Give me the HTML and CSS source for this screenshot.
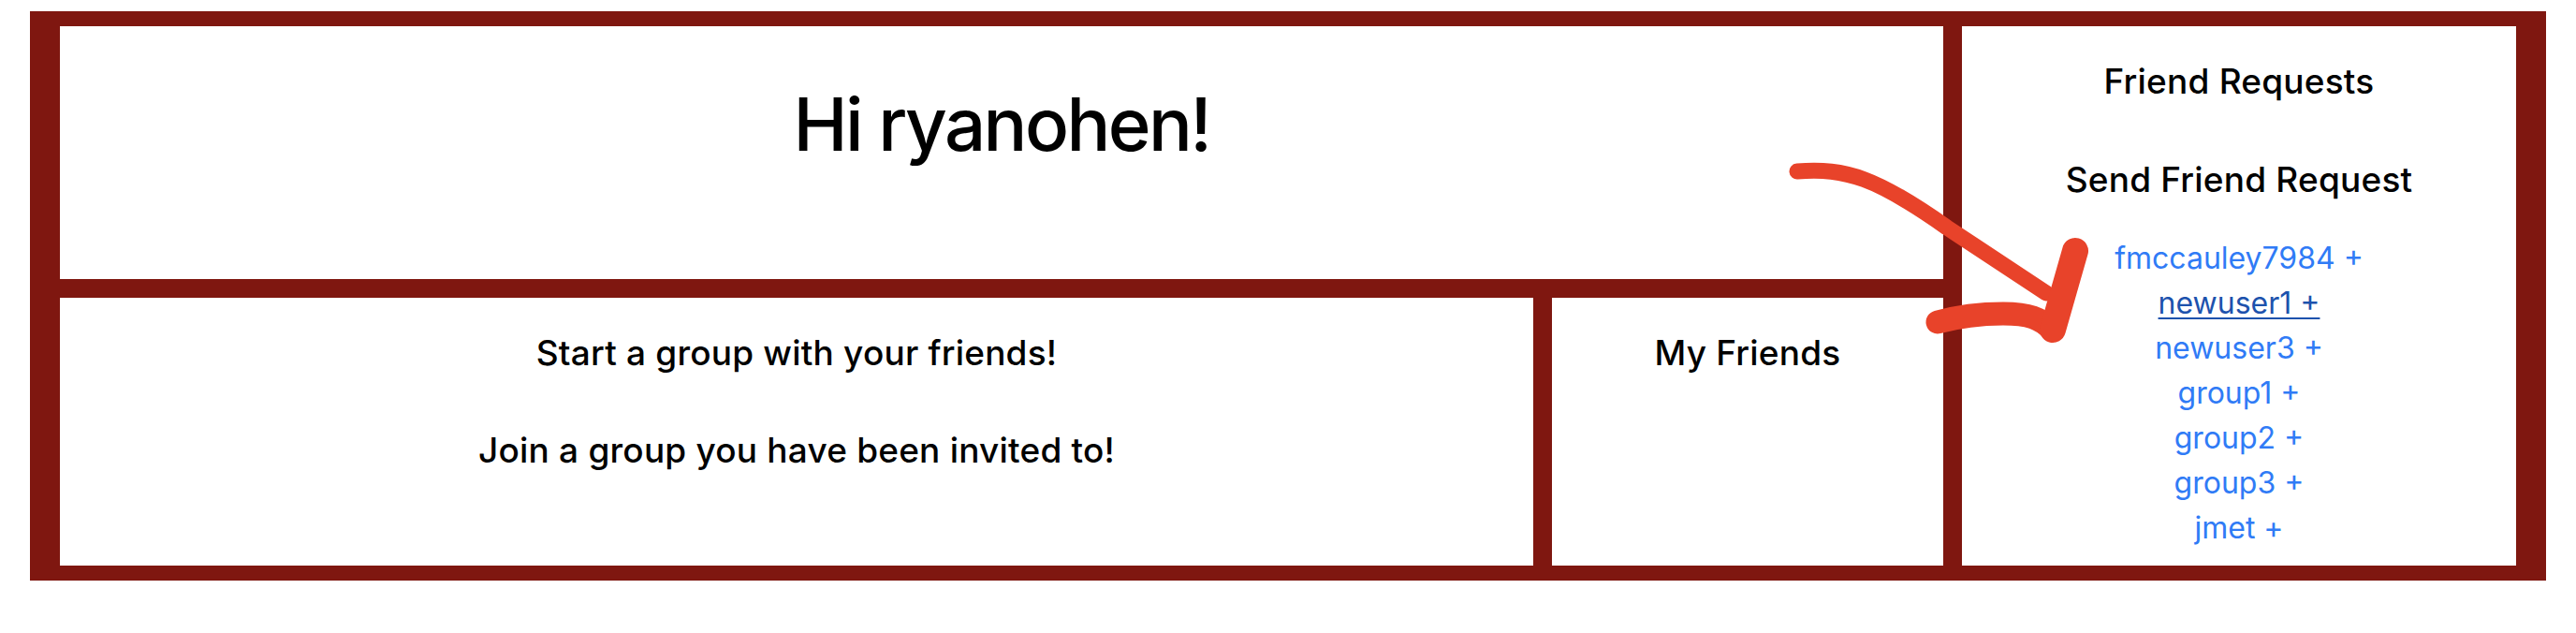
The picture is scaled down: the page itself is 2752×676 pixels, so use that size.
FILE: index.html
```html
<!DOCTYPE html>
<html lang="en">
<head>
<meta charset="utf-8">
<title>Home</title>
<link rel="stylesheet" href="styles.css">
</head>
<body>
  <main class="board">
    <section class="cell cell-greeting">
      <h1 class="greeting">Hi ryanohen!</h1>
    </section>
    <section class="cell cell-groups">
      <h3 class="heading heading-start">Start a group with your friends!</h3>
      <h3 class="heading heading-join">Join a group you have been invited to!</h3>
    </section>
    <section class="cell cell-friends">
      <h3 class="heading">My Friends</h3>
    </section>
    <aside class="cell cell-requests">
      <h3 class="heading">Friend Requests</h3>
      <h3 class="heading heading-send">Send Friend Request</h3>
      <ul class="user-list">
        <li><a href="#" class="user-link">fmccauley7984 +</a></li>
        <li><a href="#" class="user-link is-hover">newuser1 +</a></li>
        <li><a href="#" class="user-link">newuser3 +</a></li>
        <li><a href="#" class="user-link">group1 +</a></li>
        <li><a href="#" class="user-link">group2 +</a></li>
        <li><a href="#" class="user-link">group3 +</a></li>
        <li><a href="#" class="user-link">jmet +</a></li>
      </ul>
    </aside>
  </main>
  <svg class="annotation" viewBox="0 0 2752 676" width="2752" height="676" aria-hidden="true">
    <path class="stroke shaft" d="M1920,183 C1972,179 2005,190 2080,243 L2186,313"/>
    <path class="stroke barb-low" d="M2070,344 C2092,338 2112,335 2140,335 C2168,335 2180,340 2192,352"/>
    <path class="stroke barb-high" d="M2193,352 L2217,268"/>
  </svg>
</body>
</html>
```
FILE: styles.css
```css
* {
  box-sizing: border-box;
}

html, body {
  margin: 0;
  background: #ffffff;
}

body {
  position: relative;
  padding: 12px 32px;
  font-family: Inter, "Liberation Sans", Arial, sans-serif;
  color: #000000;
}

.board {
  display: grid;
  grid-template-columns: 1574fr 418fr 592fr;
  grid-template-rows: 270px 286px;
  gap: 20px;
  padding: 16px 32px;
  background: #7f1710;
}

.cell {
  background: #ffffff;
  text-align: center;
  overflow: hidden;
}

.cell-greeting {
  grid-column: 1 / 3;
  grid-row: 1;
}

.cell-groups {
  grid-column: 1;
  grid-row: 2;
}

.cell-friends {
  grid-column: 2;
  grid-row: 2;
}

.cell-requests {
  grid-column: 3;
  grid-row: 1 / 3;
}

.greeting {
  margin: 56px 0 0;
  font-size: 78px;
  line-height: 97px;
  font-weight: 500;
  letter-spacing: -2.6px;
}

.heading {
  margin: 37px 0 0;
  font-size: 37px;
  line-height: 44px;
  font-weight: 500;
  letter-spacing: 0.2px;
}

.heading-join {
  margin-top: 60px;
}

.heading-send {
  margin-top: 61px;
}

.user-list {
  list-style: none;
  margin: 38px 0 0;
  padding: 0;
}

.user-list li {
  font-size: 32px;
  line-height: 48px;
}

.user-link {
  color: #307bf6;
  text-decoration: none;
}

.user-link.is-hover {
  color: #1d52ad;
  text-decoration: underline;
  text-decoration-thickness: 2px;
  text-underline-offset: 4px;
}

.annotation {
  position: absolute;
  top: 0;
  left: 0;
  pointer-events: none;
}

.stroke {
  fill: none;
  stroke: #e8432a;
  stroke-linecap: round;
  stroke-linejoin: round;
}

.shaft {
  stroke-width: 17;
}

.barb-low {
  stroke-width: 25;
}

.barb-high {
  stroke-width: 28;
}
```
